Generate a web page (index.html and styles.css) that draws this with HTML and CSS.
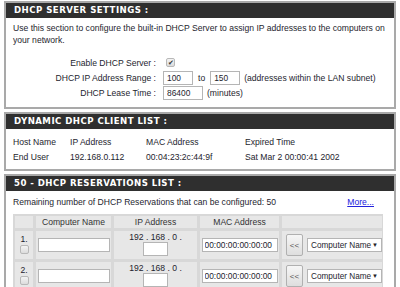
FILE: index.html
```html
<!DOCTYPE html>
<html lang="en">
<head>
  <meta charset="UTF-8">
  <title>DHCP Settings</title>
  <link rel="stylesheet" href="styles.css">
</head>
<body>
  <div class="page">

    <div class="box">
      <div class="box-title">DHCP SERVER SETTINGS :</div>
      <div class="box-body">
        <p class="intro">Use this section to configure the built-in DHCP Server to assign IP addresses to the computers on your network.</p>
        <div class="form-rows">
          <div class="form-row">
            <span class="lbl">Enable DHCP Server :</span>
            <span class="ctl"><span class="check on">&#10004;</span></span>
          </div>
          <div class="form-row">
            <span class="lbl">DHCP IP Address Range :</span>
            <span class="ctl">
              <input class="txt w-range" type="text" value="100">
              <span class="sep">to</span>
              <input class="txt w-range" type="text" value="150">
              <span class="note">(addresses within the LAN subnet)</span>
            </span>
          </div>
          <div class="form-row">
            <span class="lbl">DHCP Lease Time :</span>
            <span class="ctl">
              <input class="txt w-lease" type="text" value="86400">
              <span class="note">(minutes)</span>
            </span>
          </div>
        </div>
      </div>
    </div>

    <div class="box">
      <div class="box-title">DYNAMIC DHCP CLIENT LIST :</div>
      <div class="box-body clients">
        <div class="client-row">
          <span>Host Name</span><span>IP Address</span><span>MAC Address</span><span>Expired Time</span>
        </div>
        <div class="client-row">
          <span>End User</span><span>192.168.0.112</span><span>00:04:23:2c:44:9f</span><span>Sat Mar 2 00:00:41 2002</span>
        </div>
      </div>
    </div>

    <div class="box">
      <div class="box-title">50 - DHCP RESERVATIONS LIST :</div>
      <div class="box-body">
        <div class="remain">
          <span>Remaining number of DHCP Reservations that can be configured: 50</span>
          <a href="#" class="more">More...</a>
        </div>
        <div class="res-table">
          <div class="cell head"></div>
          <div class="cell head">Computer Name</div>
          <div class="cell head">IP Address</div>
          <div class="cell head">MAC Address</div>
          <div class="cell head"></div>

          <div class="cell num"><span>1.</span><span class="check"></span></div>
          <div class="cell mid"><input class="txt w-name" type="text"></div>
          <div class="cell ip"><span>192 . 168 . 0 .</span><input class="txt w-oct" type="text"></div>
          <div class="cell mid"><input class="txt w-mac" type="text" value="00:00:00:00:00:00"></div>
          <div class="cell pick"><span class="btn">&lt;&lt;</span><span class="select">Computer Name<span class="arrow">&#9660;</span></span></div>

          <div class="cell num"><span>2.</span><span class="check"></span></div>
          <div class="cell mid"><input class="txt w-name" type="text"></div>
          <div class="cell ip"><span>192 . 168 . 0 .</span><input class="txt w-oct" type="text"></div>
          <div class="cell mid"><input class="txt w-mac" type="text" value="00:00:00:00:00:00"></div>
          <div class="cell pick"><span class="btn">&lt;&lt;</span><span class="select">Computer Name<span class="arrow">&#9660;</span></span></div>
        </div>
      </div>
    </div>

  </div>
</body>
</html>
```

FILE: styles.css
```css
* {
  box-sizing: border-box;
  margin: 0;
  padding: 0;
}

body {
  width: 400px;
  height: 287px;
  overflow: hidden;
  background: #fff;
  font-family: 'Liberation Sans', Arial, sans-serif;
  font-size: 8.6px;
  color: #1e1e2e;
}

.page {
  padding: 1px 4px 0 4px;
  display: flex;
  flex-direction: column;
  gap: 3px;
}

.box {
  border: 2px solid #a9a9a9;
}

.box-title {
  height: 15px;
  line-height: 15px;
  background: #2f2f2f;
  color: #fff;
  font-family: 'DejaVu Sans', Verdana, sans-serif;
  font-weight: bold;
  font-size: 8.6px;
  letter-spacing: 0.45px;
  padding-left: 8px;
}

.box-body {
  padding: 5px 7px 7px 7px;
}

.intro {
  line-height: 11.5px;
}

.form-rows {
  margin-top: 9px;
  display: flex;
  flex-direction: column;
}

.form-row {
  display: flex;
  align-items: center;
  height: 15px;
}

.lbl {
  width: 150px;
  text-align: right;
  padding-right: 7px;
}

.ctl {
  display: flex;
  align-items: center;
  gap: 4px;
}

.txt {
  height: 14px;
  border: 1px solid #b5b5b5;
  background: #fff;
  font-family: 'Liberation Sans', Arial, sans-serif;
  font-size: 8.4px;
  color: #1e1e2e;
  padding: 0 3px;
  outline: none;
}

.w-range { width: 30px; }
.w-lease { width: 40px; }
.w-name { width: 72px; }
.w-oct { width: 25px; }
.w-mac { width: 76px; padding: 0 2px; }

.sep {
  margin: 0 1px;
}

.check {
  display: inline-block;
  width: 9px;
  height: 9px;
  border: 1px solid #b8b8b8;
  border-radius: 2px;
  background: linear-gradient(#f4f4f4, #dcdcdc);
  font-size: 7px;
  line-height: 8px;
  text-align: center;
  color: #333;
}

.check.on {
  margin-left: 3px;
}

.clients {
  padding: 5px 7px 5px 7px;
}

.client-row {
  display: grid;
  grid-template-columns: 57px 76px 99px 1fr;
  height: 15px;
  align-items: center;
}

.remain {
  display: flex;
  justify-content: space-between;
  align-items: center;
  height: 12px;
  padding-right: 13px;
}

.more {
  color: #2222dd;
  text-decoration: underline;
}

.res-table {
  margin-top: 6px;
  margin-right: 4px;
  display: grid;
  grid-template-columns: 18px 75px 83px 79px 1fr;
  grid-template-rows: 12px 28px 28px;
  gap: 3px;
  padding: 2px;
  background: #d8d8d8;
}

.cell {
  background: #e7e7e7;
}

.cell.head {
  display: flex;
  align-items: center;
  justify-content: center;
  color: #333;
}

.cell.num {
  display: flex;
  flex-direction: column;
  align-items: center;
  gap: 1px;
  padding-top: 3px;
}

.cell.mid {
  display: flex;
  align-items: center;
  justify-content: center;
}

.cell.ip {
  display: flex;
  flex-direction: column;
  align-items: center;
  padding-top: 1px;
}

.cell.ip span {
  line-height: 10px;
}

.cell.pick {
  display: flex;
  align-items: center;
  gap: 4px;
  padding-left: 4px;
}

.btn {
  width: 17px;
  height: 22px;
  border: 1px solid #b0b0b0;
  border-radius: 2px;
  background: linear-gradient(#f6f6f6, #dedede);
  display: flex;
  align-items: center;
  justify-content: center;
  color: #555;
  font-size: 8px;
}

.select {
  width: 75px;
  height: 14px;
  border: 1px solid #b5b5b5;
  background: #fff;
  display: flex;
  align-items: center;
  justify-content: space-between;
  padding: 0 3px;
  font-size: 8.2px;
}

.arrow {
  font-size: 6px;
  color: #222;
}
```
